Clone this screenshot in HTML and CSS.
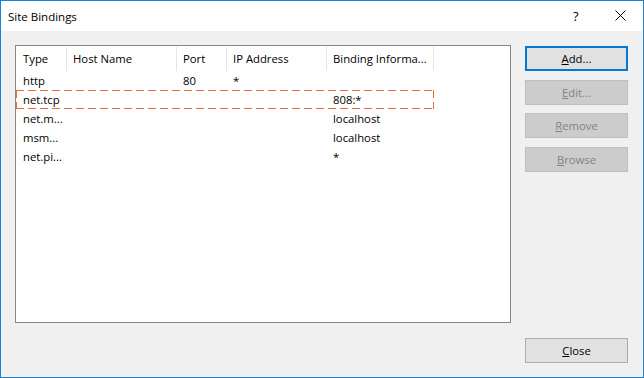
FILE: index.html
```html
<!DOCTYPE html>
<html>
<head>
  <title>Site Bindings</title>
  <link rel="stylesheet" href="styles.css">
</head>
<body>
  <div class="window">
    <div class="titlebar">
      <span class="title">Site Bindings</span>
      <span class="help">?</span>
      <span class="close-x">
        <svg width="11" height="11" viewBox="0 0 11 11">
          <path d="M0.5 0.5 L10.5 10.5 M10.5 0.5 L0.5 10.5" stroke="#000" stroke-width="1" fill="none"/>
        </svg>
      </span>
    </div>
    <div class="content">
      <div class="main">
        <div class="list">
          <div class="row head">
            <div class="cell c-type">Type</div>
            <div class="cell c-host">Host Name</div>
            <div class="cell c-port">Port</div>
            <div class="cell c-ip">IP Address</div>
            <div class="cell c-info">Binding Informa...</div>
          </div>
          <div class="row">
            <div class="cell c-type">http</div>
            <div class="cell c-host"></div>
            <div class="cell c-port">80</div>
            <div class="cell c-ip">*</div>
            <div class="cell c-info"></div>
          </div>
          <div class="row focused">
            <div class="cell c-type">net.tcp</div>
            <div class="cell c-host"></div>
            <div class="cell c-port"></div>
            <div class="cell c-ip"></div>
            <div class="cell c-info">808:*</div>
          </div>
          <div class="row">
            <div class="cell c-type">net.m...</div>
            <div class="cell c-host"></div>
            <div class="cell c-port"></div>
            <div class="cell c-ip"></div>
            <div class="cell c-info">localhost</div>
          </div>
          <div class="row">
            <div class="cell c-type">msm...</div>
            <div class="cell c-host"></div>
            <div class="cell c-port"></div>
            <div class="cell c-ip"></div>
            <div class="cell c-info">localhost</div>
          </div>
          <div class="row">
            <div class="cell c-type">net.pi...</div>
            <div class="cell c-host"></div>
            <div class="cell c-port"></div>
            <div class="cell c-ip"></div>
            <div class="cell c-info">*</div>
          </div>
        </div>
        <div class="actions">
          <button class="btn default"><u>A</u>dd...</button>
          <button class="btn" disabled><u>E</u>dit...</button>
          <button class="btn" disabled><u>R</u>emove</button>
          <button class="btn" disabled><u>B</u>rowse</button>
        </div>
      </div>
      <div class="footer">
        <button class="btn"><u>C</u>lose</button>
      </div>
    </div>
  </div>
</body>
</html>
```

FILE: styles.css
```css
body {
  margin: 0;
  font-family: "Open Sans", "Noto Sans", sans-serif;
  font-size: 11.3px;
  color: #000;
}
.window {
  width: 644px;
  height: 378px;
  box-sizing: border-box;
  border: 1px solid #1883d7;
  background-color: #f0f0f0;
  display: flex;
  flex-direction: column;
}
.titlebar {
  height: 30px;
  background-color: #fff;
  display: flex;
  align-items: center;
  position: relative;
}
.title {
  margin-left: 7px;
  font-size: 11.5px;
}
.help {
  position: absolute;
  left: 572px;
  top: 6px;
  font-size: 13px;
}
.close-x {
  position: absolute;
  left: 614px;
  top: 9px;
  width: 11px;
  height: 11px;
}
.close-x svg {
  display: block;
}
.content {
  flex: 1;
  padding: 14px 15px 14px 14px;
  display: flex;
  flex-direction: column;
}
.main {
  display: flex;
  gap: 14px;
  height: 278px;
}
.list {
  width: 496px;
  box-sizing: border-box;
  border: 1px solid #828790;
  background-color: #fff;
}
.row {
  display: flex;
  width: 418px;
  height: 19px;
  align-items: center;
  box-sizing: border-box;
}
.row.head {
  height: 25px;
  align-items: stretch;
}
.cell {
  box-sizing: border-box;
  padding-left: 6px;
  white-space: nowrap;
  overflow: hidden;
  line-height: 19px;
}
.head .cell {
  margin-top: 1px;
  border-right: 1px solid #e5e5e5;
  line-height: 23px;
}
.cell.c-type { width: 51px; padding-left: 7px; }
.cell.c-host { width: 110px; }
.cell.c-port { width: 50px; }
.cell.c-ip { width: 100px; }
.cell.c-info { width: 107px; }
.row.focused {
  background:
    repeating-linear-gradient(90deg, #ee6a3d 0 8px, transparent 8px 12px) top left / 100% 1px no-repeat,
    repeating-linear-gradient(90deg, #ee6a3d 0 8px, transparent 8px 12px) bottom left / 100% 1px no-repeat,
    repeating-linear-gradient(180deg, #ee6a3d 0 8px, transparent 8px 12px) top left / 1px 100% no-repeat,
    repeating-linear-gradient(180deg, #ee6a3d 0 8px, transparent 8px 12px) top right / 1px 100% no-repeat;
}
.actions {
  display: flex;
  flex-direction: column;
  gap: 8.5px;
  padding-top: 1px;
}
.btn {
  width: 103px;
  height: 25px;
  box-sizing: border-box;
  font-family: inherit;
  font-size: 11.3px;
  color: #000;
  background-color: #e1e1e1;
  border: 1px solid #adadad;
  padding: 0;
  margin: 0;
}
.btn.default {
  border: 2px solid #0078d7;
}
.btn:disabled {
  background-color: #cccccc;
  border-color: #bfbfbf;
  color: #838383;
}
.footer {
  margin-top: 15px;
  display: flex;
  justify-content: flex-end;
}
```
